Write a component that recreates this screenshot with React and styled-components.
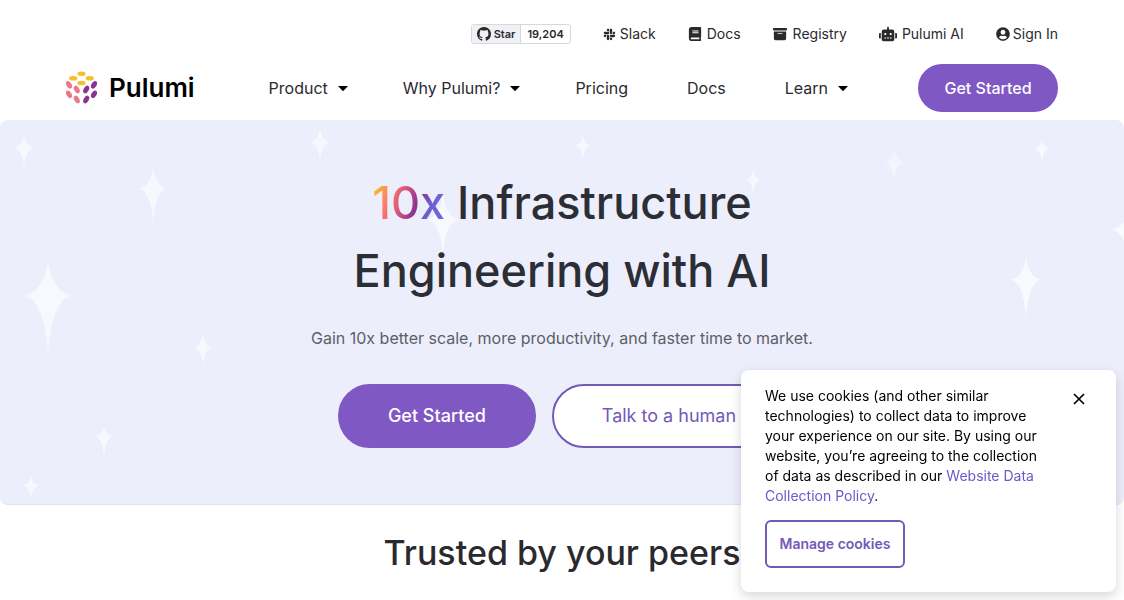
import React, { useState } from "react";
import styled, { createGlobalStyle } from "styled-components";
import { FaSlack, FaBook, FaRobot, FaUserCircle } from "react-icons/fa";
import { FaBoxArchive } from "react-icons/fa6";

const colors = {
  ink: "#2a2a2e",
  violet: "#7f58c4",
  outline: "#7359b8",
  link: "#6a5acb",
  hero: "#edeefb",
};

const GlobalStyle = createGlobalStyle`
  *, *::before, *::after { box-sizing: border-box; }
  body {
    margin: 0;
    background: #fff;
    color: ${colors.ink};
    font-family: Inter, "Liberation Sans", sans-serif;
    font-size: 16px;
    line-height: 24px;
  }
  a { color: inherit; text-decoration: none; }
  button { font: inherit; color: inherit; cursor: pointer; }
  h1, h2, p { margin: 0; }
`;

const Header = styled.header`
  display: flex;
  flex-direction: column;
  padding: 24px 66px 8px;
`;

const UtilityBar = styled.div`
  display: flex;
  justify-content: flex-end;
  align-items: center;
  gap: 32px;
  height: 20px;
  font-size: 14px;
  line-height: 20px;
`;

const UtilityLink = styled.a`
  display: flex;
  align-items: center;
  gap: ${(p) => p.$gap || 4}px;
`;

const StarBadge = styled.div`
  display: flex;
  height: 20px;
  border: 1px solid #d5d8dc;
  border-radius: 3px;
  overflow: hidden;
  font-size: 11px;
  line-height: 18px;
  font-weight: 600;
`;

const StarAction = styled.a`
  display: flex;
  align-items: center;
  gap: 3px;
  padding: 0 5px;
  background: #eff1f5;
  border-right: 1px solid #d5d8dc;
`;

const StarCount = styled.a`
  padding: 0 6px;
`;

const MainBar = styled.div`
  display: flex;
  align-items: center;
  justify-content: space-between;
  margin-top: 20px;
`;

const Brand = styled.a`
  display: flex;
  align-items: center;
  gap: 12px;
  color: #000;
  font-size: 26px;
  line-height: 32px;
  font-weight: 600;
`;

const Nav = styled.nav`
  display: flex;
  align-items: center;
  gap: 59px;
  margin-left: 4px;
`;

const NavLink = styled.a``;

const NavMenu = styled.button`
  display: flex;
  align-items: center;
  gap: 10px;
  padding: 0;
  border: 0;
  background: none;
  & + * { margin-left: -4px; }
`;

const Pill = styled.a`
  display: flex;
  align-items: center;
  justify-content: center;
  height: ${(p) => (p.$large ? 64 : 48)}px;
  min-width: 140px;
  padding: 0 ${(p) => (p.$large ? 48 : 24)}px;
  border: 2px solid ${(p) => (p.$outlined ? colors.outline : colors.violet)};
  border-radius: 32px;
  font-size: ${(p) => (p.$large ? 18 : 16)}px;
  font-weight: ${(p) => (p.$outlined ? 400 : 500)};
  color: ${(p) => (p.$outlined ? colors.outline : "#fff")};
  background: ${(p) => (p.$outlined ? "#fff" : colors.violet)};
`;

const Hero = styled.section`
  position: relative;
  overflow: hidden;
  display: flex;
  flex-direction: column;
  align-items: center;
  padding: 49px 24px 56px;
  border-radius: 8px;
  background: ${colors.hero};
  border-bottom: 1px solid #e0e1ea;
  text-align: center;
`;

const Sky = styled.svg`
  position: absolute;
  inset: 0;
  width: 100%;
  height: 100%;
`;

const HeroContent = styled.div`
  position: relative;
  display: flex;
  flex-direction: column;
  align-items: center;
`;

const Title = styled.h1`
  font-size: 45px;
  line-height: 68px;
  font-weight: 500;
  color: #2c2e36;
`;

const Gradient = styled.span`
  color: transparent;
  background: linear-gradient(110deg, #f9b233 12%, #fb8268 24%, #d9557c 42%, #8a3391 60%, #6b5fd0 74%, #7a6ad8 100%);
  background-clip: text;
  -webkit-background-clip: text;
`;

const Lead = styled.p`
  margin-top: 21px;
  color: #5c5e68;
`;

const Actions = styled.div`
  display: flex;
  gap: 16px;
  margin-top: 34px;
`;

const Trusted = styled.section`
  padding: 24px 24px 22px;
  text-align: center;
`;

const SectionTitle = styled.h2`
  font-size: 34px;
  line-height: 48px;
  font-weight: 500;
`;

const CookieCard = styled.aside`
  position: fixed;
  right: 8px;
  bottom: 8px;
  width: 375px;
  padding: 16px 24px 24px;
  border-radius: 8px;
  background: #fff;
  color: #000;
  box-shadow: 0 4px 12px rgba(0, 0, 0, 0.16);
  font-size: 14px;
  line-height: 20px;
`;

const CookieBody = styled.div`
  display: flex;
  align-items: flex-start;
  justify-content: space-between;
`;

const CookieText = styled.p`
  width: 280px;
`;

const PolicyLink = styled.a`
  color: ${colors.link};
`;

const CloseButton = styled.button`
  display: flex;
  padding: 7px;
  border: 0;
  background: none;
`;

const ManageButton = styled.button`
  height: 48px;
  min-width: 140px;
  margin-top: 14px;
  padding: 0 12px;
  border: 2px solid ${colors.outline};
  border-radius: 6px;
  background: #fff;
  color: ${colors.outline};
  font-weight: 600;
`;

const LOGO_TOP = [[15, 2.7], [6.7, 7.3], [23.3, 7.3], [15, 12]];
const LOGO_LEFT = [[3, 13.8], [10.8, 18.5], [3, 23.3], [10.8, 28.5]];

function Logo() {
  return (
    <svg width="31" height="34" viewBox="0 0 31 34" aria-hidden="true">
      {LOGO_TOP.map(([x, y]) => (
        <ellipse key={`t${x}-${y}`} cx={x + 0.5} cy={y} rx="4.1" ry="2.3" fill="#f7bf2a" />
      ))}
      {LOGO_LEFT.map(([x, y]) => (
        <ellipse key={`l${x}-${y}`} cx={x} cy={y} rx="2.5" ry="4.1" fill="#ec7885" transform={`rotate(-30 ${x} ${y})`} />
      ))}
      {LOGO_LEFT.map(([x, y]) => (
        <ellipse key={`r${x}-${y}`} cx={31 - x} cy={y} rx="2.5" ry="4.1" fill="#8a3391" transform={`rotate(30 ${31 - x} ${y})`} />
      ))}
    </svg>
  );
}

function GithubMark() {
  return (
    <svg width="14" height="14" viewBox="0 0 16 16" fill="currentColor" aria-hidden="true">
      <path fillRule="evenodd" d="M8 0C3.58 0 0 3.58 0 8c0 3.54 2.29 6.53 5.47 7.59.4.07.55-.17.55-.38 0-.19-.01-.82-.01-1.49-2.01.37-2.53-.49-2.69-.94-.09-.23-.48-.94-.82-1.13-.28-.15-.68-.52-.01-.53.63-.01 1.08.58 1.23.82.72 1.21 1.87.87 2.33.66.07-.52.28-.87.51-1.07-1.78-.2-3.64-.89-3.64-3.95 0-.87.31-1.59.82-2.15-.08-.2-.36-1.02.08-2.12 0 0 .67-.21 2.2.82.64-.18 1.32-.27 2-.27s1.36.09 2 .27c1.53-1.04 2.2-.82 2.2-.82.44 1.1.16 1.92.08 2.12.51.56.82 1.27.82 2.15 0 3.07-1.87 3.75-3.65 3.95.29.25.54.73.54 1.48 0 1.07-.01 1.93-.01 2.2 0 .21.15.46.55.38A8.01 8.01 0 0 0 16 8c0-4.42-3.58-8-8-8z" />
    </svg>
  );
}

function Caret() {
  return (
    <svg width="10" height="5" viewBox="0 0 10 5" aria-hidden="true">
      <path d="M0 0h10L5.5 4.7a.7.7 0 0 1-1 0z" fill="#000" />
    </svg>
  );
}

// x, y of the centre; half width; reach above and below the centre; opacity
const STARS = [
  [24, 28, 10, 13, 21, 0.7],
  [153, 69, 14, 22, 34, 0.7],
  [48, 176, 24, 34, 56, 0.75],
  [203, 228, 9, 14, 18, 0.7],
  [320, 23, 10, 14, 18, 0.7],
  [583, 26, 7, 10, 15, 0.7],
  [753, 60, 7, 10, 15, 0.7],
  [443, 100, 16, 26, 34, 0.75],
  [894, 43, 10, 14, 19, 0.5],
  [1042, 29, 7, 9, 13, 0.8],
  [1026, 160, 15, 22, 39, 0.8],
  [1132, 110, 20, 32, 52, 0.8],
  [104, 317, 9, 10, 20, 0.75],
  [31, 366, 8, 10, 14, 0.7],
];

function starPath([x, y, w, up, down]) {
  const i = w * 0.17;
  return `M${x} ${y - up}Q${x + i} ${y - i} ${x + w} ${y}Q${x + i} ${y + i} ${x} ${y + down}Q${x - i} ${y + i} ${x - w} ${y}Q${x - i} ${y - i} ${x} ${y - up}Z`;
}

export default function App() {
  const [cookiesOpen, setCookiesOpen] = useState(true);
  return (
    <>
      <GlobalStyle />
      <Header>
        <UtilityBar>
          <StarBadge>
            <StarAction href="#star"><GithubMark />Star</StarAction>
            <StarCount href="#stargazers">19,204</StarCount>
          </StarBadge>
          <UtilityLink href="#slack"><FaSlack size={13} />Slack</UtilityLink>
          <UtilityLink href="#docs" $gap={5}><FaBook size={14} />Docs</UtilityLink>
          <UtilityLink href="#registry" $gap={6}><FaBoxArchive size={14} />Registry</UtilityLink>
          <UtilityLink href="#ai" $gap={5}><FaRobot size={18} />Pulumi AI</UtilityLink>
          <UtilityLink href="#signin" $gap={3}><FaUserCircle size={14} />Sign In</UtilityLink>
        </UtilityBar>
        <MainBar>
          <Brand href="#home"><Logo />Pulumi</Brand>
          <Nav>
            <NavMenu type="button">Product<Caret /></NavMenu>
            <NavMenu type="button">Why Pulumi?<Caret /></NavMenu>
            <NavLink href="#pricing">Pricing</NavLink>
            <NavLink href="#docs">Docs</NavLink>
            <NavMenu type="button">Learn<Caret /></NavMenu>
          </Nav>
          <Pill href="#start">Get Started</Pill>
        </MainBar>
      </Header>
      <main>
        <Hero>
          <Sky viewBox="0 0 1124 385" preserveAspectRatio="xMidYMid slice" aria-hidden="true">
            {STARS.map((s) => (
              <path key={`${s[0]}-${s[1]}`} d={starPath(s)} fill="#fafcff" opacity={s[5]} />
            ))}
          </Sky>
          <HeroContent>
            <Title><Gradient>10x</Gradient> Infrastructure<br />Engineering with AI</Title>
            <Lead>Gain 10x better scale, more productivity, and faster time to market.</Lead>
            <Actions>
              <Pill $large href="#start">Get Started</Pill>
              <Pill $large $outlined href="#contact">Talk to a human</Pill>
            </Actions>
          </HeroContent>
        </Hero>
        <Trusted>
          <SectionTitle>Trusted by your peers</SectionTitle>
        </Trusted>
      </main>
      {cookiesOpen && (
        <CookieCard aria-label="Cookie notice">
          <CookieBody>
            <CookieText>
              We use cookies (and other similar technologies) to collect data to improve your experience on our site. By using our website, you’re agreeing to the collection of data as described in our <PolicyLink href="#policy">Website Data Collection Policy</PolicyLink>.
            </CookieText>
            <CloseButton type="button" aria-label="Close" onClick={() => setCookiesOpen(false)}>
              <svg width="12" height="12" viewBox="0 0 12 12" aria-hidden="true">
                <path d="M1 1l10 10M11 1L1 11" stroke="#000" strokeWidth="1.7" fill="none" />
              </svg>
            </CloseButton>
          </CookieBody>
          <ManageButton type="button">Manage cookies</ManageButton>
        </CookieCard>
      )}
    </>
  );
}
